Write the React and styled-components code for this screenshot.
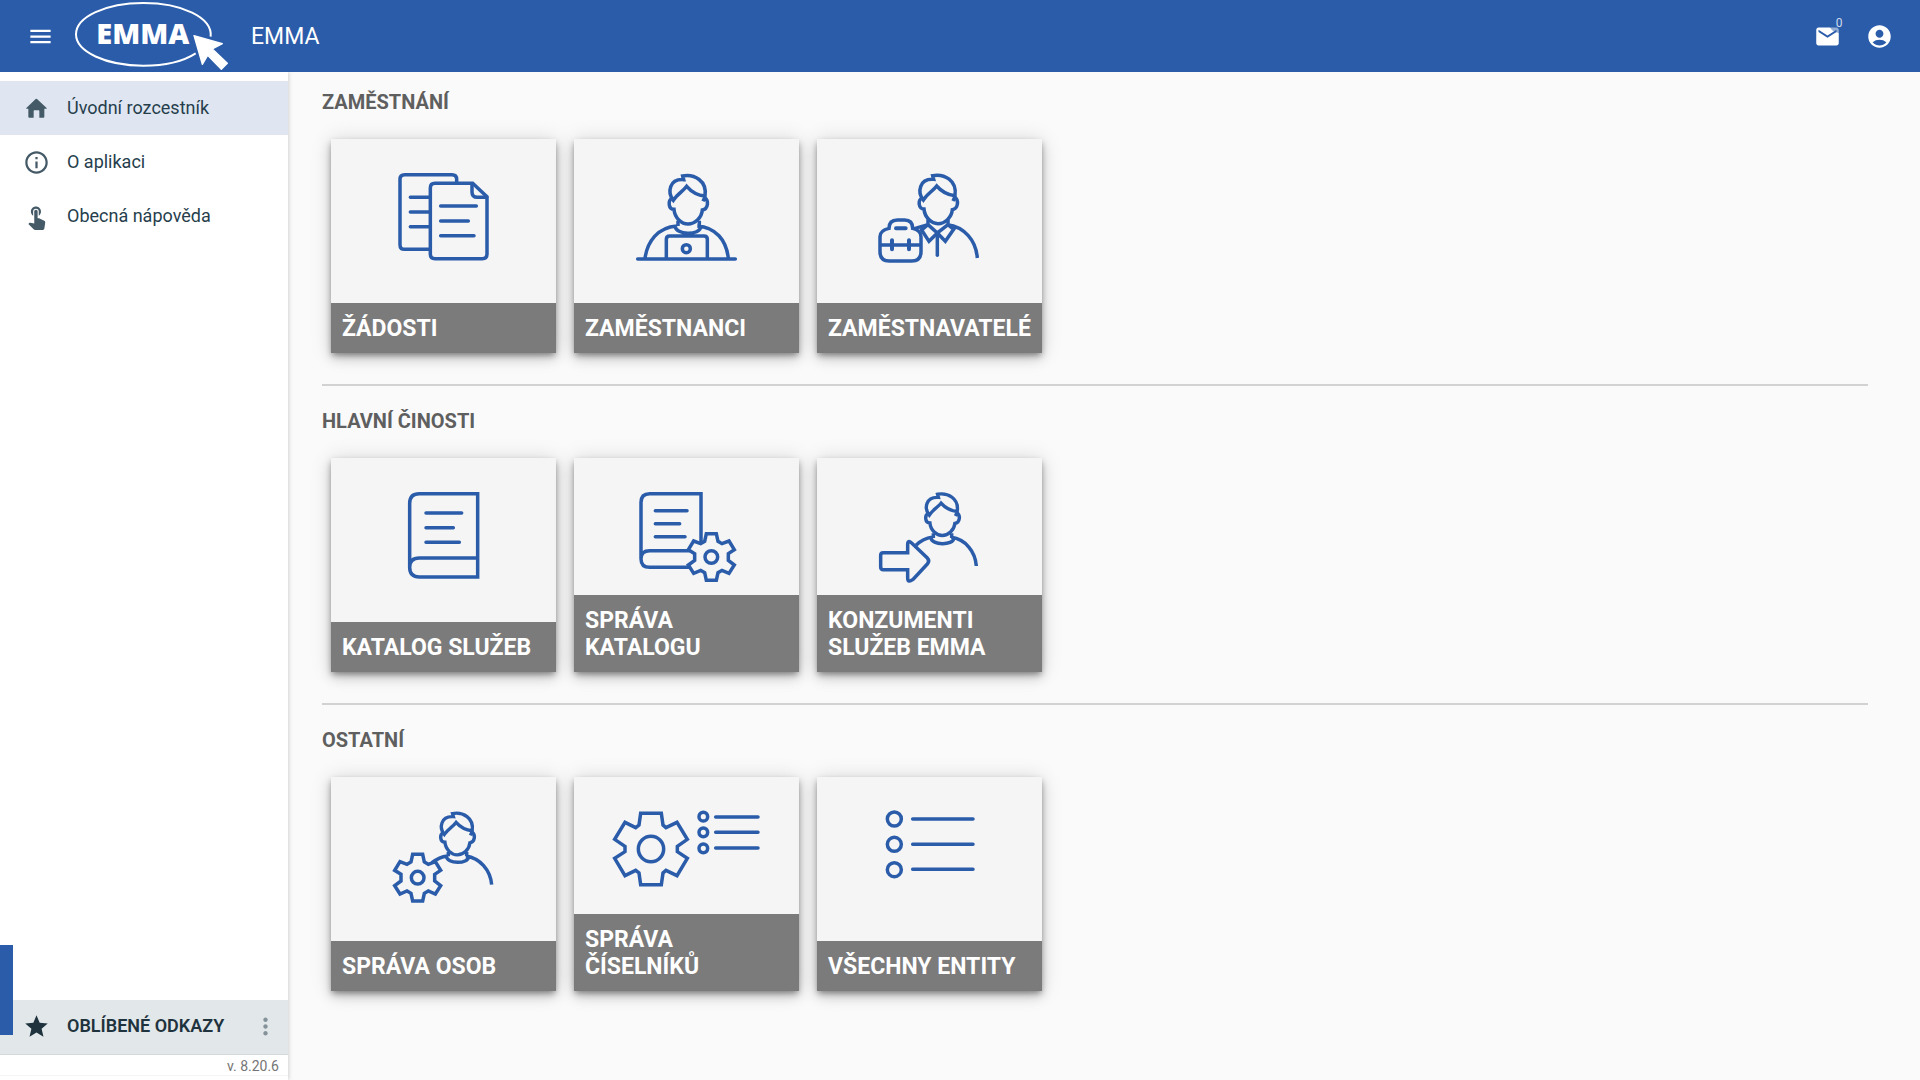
import React from "react";
import styled, { createGlobalStyle } from "styled-components";
import {
  MdMenu,
  MdEmail,
  MdAccountCircle,
  MdInfoOutline,
  MdTouchApp,
  MdStar,
  MdMoreVert,
} from "react-icons/md";

const BLUE = "#2a5caa";

const GlobalStyle = createGlobalStyle`
  *, *::before, *::after { box-sizing: border-box; }
  body {
    margin: 0;
    background: #fafafa;
    font-family: Roboto, "Liberation Sans", sans-serif;
    font-size: 18px;
    line-height: 24px;
  }
  button { font: inherit; border: 0; background: none; padding: 0; cursor: pointer; }
`;

const Page = styled.div`
  display: flex;
  flex-direction: column;
  min-height: 100vh;
`;

const TopBar = styled.header`
  display: flex;
  align-items: center;
  height: 72px;
  padding: 0 27px;
  background: ${BLUE};
  color: #fff;
`;

const IconButton = styled.button`
  display: flex;
  position: relative;
  flex: none;
  color: ${(p) => p.$color || "inherit"};
`;

const LogoLink = styled.a`
  display: flex;
  margin-left: 21px;
`;

const AppTitle = styled.h1`
  margin: 0 auto 0 23px;
  padding-top: 2px;
  font-size: 23px;
  line-height: 32px;
  font-weight: 400;
`;

const Actions = styled.div`
  display: flex;
  gap: 25px;
`;

const Badge = styled.span`
  position: absolute;
  top: -10px;
  right: -8px;
  width: 20px;
  height: 20px;
  border-radius: 50%;
  background: rgba(42, 92, 170, 0.5);
  color: rgba(255, 255, 255, 0.8);
  font-size: 12px;
  line-height: 20px;
  text-align: center;
`;

const Body = styled.div`
  display: flex;
  flex: 1;
`;

const Sidebar = styled.aside`
  position: relative;
  display: flex;
  flex-direction: column;
  flex: none;
  width: 288px;
  padding-top: 9px;
  background: #fff;
  box-shadow: 1px 0 4px rgba(0, 0, 0, 0.16);
  clip-path: inset(0 -8px 0 0);
`;

const MenuLink = styled.a`
  display: flex;
  align-items: center;
  gap: 17px;
  height: 54px;
  padding: 0 23px;
  background: ${(p) => (p.$active ? "#dfe6f1" : "transparent")};
  color: #263e4c;
  text-decoration: none;

  svg { color: #455a67; flex: none; }
`;

const Favourites = styled.div`
  display: flex;
  align-items: center;
  gap: 17px;
  height: 55px;
  margin-top: auto;
  padding: 0 9px 2px 23px;
  border-bottom: 1px solid #d3d9da;
  background: #e2e7e9;
  color: #1e333d;
  font-weight: 600;

  > span { flex: 1; }
`;

const Version = styled.div`
  height: 21px;
  margin-bottom: 4px;
  padding-right: 9px;
  border-bottom: 1px solid #f5f5f5;
  color: #757575;
  font-size: 14px;
  line-height: 22px;
  text-align: right;
`;

const SideHandle = styled.button`
  position: absolute;
  left: 0;
  bottom: 45px;
  width: 13px;
  height: 90px;
  && { background: ${BLUE}; }
`;

const Content = styled.main`
  flex: 1;
  padding: 18px 52px 32px 34px;
`;

const Section = styled.section`
  & + & {
    margin-top: 31px;
    padding-top: 23px;
    border-top: 2px solid #d2d2d2;
  }
`;

const SectionTitle = styled.h2`
  margin: 0 0 25px;
  color: #5f5f5f;
  font-size: 20px;
  line-height: 24px;
  font-weight: 700;
`;

const Tiles = styled.div`
  display: flex;
  flex-wrap: wrap;
  gap: 18px;
  padding: 0 9px;
`;

const Tile = styled.a`
  display: flex;
  flex-direction: column;
  width: 225px;
  min-height: 214px;
  background: #f5f5f5;
  color: #fff;
  text-decoration: none;
  box-shadow: 0 3px 6px -1px rgba(0, 0, 0, 0.4), 0 6px 11px rgba(0, 0, 0, 0.14),
    0 1px 20px rgba(0, 0, 0, 0.14);
`;

const Caption = styled.span`
  margin-top: auto;
  padding: 12px 11px 11px;
  background: #7b7b7b;
  font-size: 23px;
  line-height: 27px;
  font-weight: 700;
`;

const Drawing = styled.svg`
  display: block;
  width: 225px;
  height: 136px;
  fill: none;
  stroke: ${BLUE};
  stroke-width: 10.5;
`;

const Head = ({ transform, strokeWidth }) => (
  <g transform={transform} strokeWidth={strokeWidth}>
    <path d="M325 211C306 187 313 146 356 149L353 138C388 132 427 152 420 198C397 196 378 184 365 169C354 184 337 192 325 211Z" />
    <path d="M321 205C308 212 310 238 327 238C329 264 350 282 369 282C389 282 410 264 412 240C430 237 432 211 419 203L414 214" />
  </g>
);

const SmallGear = ({ transform }) => (
  <g transform={transform}>
    <path d="M-15-70H15L20-47L32-40L53-48L69-22L51-10V10L69 24L53 49L32 40L20 47L15 70H-15L-20 47L-32 40L-53 49L-69 24L-50 10V-10L-69-22L-53-48L-32-40L-20-47Z" />
    <circle r="19" />
  </g>
);

const drawings = {
  requests: (
    <Drawing viewBox="63 177 675 408" strokeLinecap="round">
      <path d="M358 508H284Q270 508 270 494V298Q270 284 284 284H426Q440 284 440 298V306" />
      <path d="M375 310H488L531 350V522Q531 536 517 536H375Q361 536 361 522V324Q361 310 375 310Z" />
      <path d="M486 312V336Q486 352 502 352H530M301 352H358M301 396H358M301 440H358M392 378H499M392 423H475M392 467H492" />
    </Drawing>
  ),
  employees: (
    <Drawing viewBox="27 27 675 408">
      <Head />
      <path d="M339 272V288M403 272V288M330 287C331 317 406 317 407 290M240 385C247 335 278 292 335 288M490 385C484 330 452 292 397 288M304 385V328Q304 318 314 318H417Q427 318 427 328V385" />
      <path d="M218 387H511" strokeLinecap="round" />
      <circle cx="364" cy="356" r="12" />
    </Drawing>
  ),
  employers: (
    <Drawing viewBox="27 27 675 408">
      <Head transform="translate(21 -1)" />
      <path d="M216 320Q216 301 243 295Q243 270 268 270H290Q314 270 314 295Q339 301 339 320V365Q339 393 311 393H244Q216 393 216 365ZM216 345H339" />
      <path d="M252 331V358M303 331V358M264 295H293" strokeWidth="12" strokeLinecap="round" />
      <path d="M360 268V284L388 309L420 284V268M357 286L341 300L363 334L388 309L412 334L437 298L420 284M319 296L360 284M418 284C468 290 504 330 508 384" />
      <path d="M388 310V376" strokeLinecap="round" />
    </Drawing>
  ),
  catalog: (
    <Drawing viewBox="63 204 675 408">
      <path d="M299 533V340Q299 311 328 311H503V561H328Q299 561 299 532Q299 504 328 504H503" />
      <path d="M348 369H455M348 413H430M348 457H448" strokeLinecap="round" />
    </Drawing>
  ),
  catalogAdmin: (
    <Drawing viewBox="27 24 675 408">
      <path d="M408 276V131H254Q228 131 228 157V326Q228 352 254 352H376M228 326Q228 302 254 302H374" />
      <path d="M271 182H366M271 221H344M271 260H360" strokeLinecap="round" />
      <SmallGear transform="translate(439 321)" />
    </Drawing>
  ),
  consumers: (
    <Drawing viewBox="27 24 675 408">
      <Head transform="translate(78 14) scale(.88 .86)" strokeWidth="11.5" />
      <path d="M376 250V264M431 250V264M369 263C370 287 436 287 437 265M324 286Q346 265 372 262M430 262C473 268 502 305 505 348" />
      <path d="M226 308H299V283Q299 269 311 279L358 324Q366 333 358 342L315 388Q299 400 299 384V359H226Q218 359 218 351V316Q218 308 226 308Z" />
    </Drawing>
  ),
  people: (
    <Drawing viewBox="63 264 675 408">
      <Head transform="translate(117 255) scale(.88 .86)" strokeWidth="11.5" />
      <path d="M415 489V502M470 489V502M409 501C410 526 475 526 476 503M366 521Q388 504 412 501M468 501C510 508 541 542 545 587" />
      <SmallGear transform="translate(323 566)" />
    </Drawing>
  ),
  codebooks: (
    <Drawing viewBox="27 24 675 408">
      <path d="M227 133H289L294 168L303 176L336 160L367 211L337 232V248L367 268L336 320L303 304L294 312L289 347H227L222 312L212 304L180 320L149 268L180 248V232L149 211L180 160L212 176L222 168Z" />
      <circle cx="258" cy="240" r="38" />
      <circle cx="415" cy="143" r="13" />
      <circle cx="415" cy="190" r="13" />
      <circle cx="415" cy="238" r="13" />
      <path d="M452 144H579M452 190H579M452 237H579" strokeLinecap="round" />
    </Drawing>
  ),
  entities: (
    <Drawing viewBox="756 24 675 408">
      <circle cx="988" cy="150" r="21" />
      <circle cx="988" cy="226" r="21" />
      <circle cx="988" cy="302" r="21" />
      <path d="M1043 150H1224M1043 226H1224M1043 301H1224" strokeLinecap="round" />
    </Drawing>
  ),
};

const HomeIcon = () => (
  <svg width="27" height="27" viewBox="69 285 81 81" fill="currentColor" aria-hidden="true">
    <path d="M109 296Q110 296 111 297L140 324Q141 326 139 326H133V350Q133 353 130 353H118V333Q118 331 116 331H103Q101 331 101 333V353H88Q85 353 85 350V326H80Q77 326 79 324L107 297Q108 296 109 296Z" />
  </svg>
);

const Logo = () => (
  <svg width="153" height="72" viewBox="225 0 459 216" role="img" aria-label="EMMA">
    <path
      d="M632 110C638 52 545 9 430 9C317 9 228 51 228 103S317 197 430 197C492 197 550 184 587 160"
      fill="none"
      stroke="#fff"
      strokeWidth="6"
    />
    <text x="289" y="131" fill="#fff" fontFamily="'Open Sans', sans-serif" fontWeight="800" fontSize="87">
      EMMA
    </text>
    <path
      d="M582 107L667 131L637 147L682 190L664 208L623 166L607 193Z"
      fill="#fff"
      stroke="#fff"
      strokeWidth="4"
      strokeLinejoin="round"
    />
  </svg>
);

const sections = [
  {
    title: "ZAMĚSTNÁNÍ",
    tiles: [
      ["requests", "ŽÁDOSTI"],
      ["employees", "ZAMĚSTNANCI"],
      ["employers", "ZAMĚSTNAVATELÉ"],
    ],
  },
  {
    title: "HLAVNÍ ČINOSTI",
    tiles: [
      ["catalog", "KATALOG SLUŽEB"],
      ["catalogAdmin", "SPRÁVA KATALOGU"],
      ["consumers", "KONZUMENTI SLUŽEB EMMA"],
    ],
  },
  {
    title: "OSTATNÍ",
    tiles: [
      ["people", "SPRÁVA OSOB"],
      ["codebooks", "SPRÁVA ČÍSELNÍKŮ"],
      ["entities", "VŠECHNY ENTITY"],
    ],
  },
];

export default function App() {
  return (
    <Page>
      <GlobalStyle />
      <TopBar>
        <IconButton aria-label="Menu">
          <MdMenu size={27} />
        </IconButton>
        <LogoLink href="#">
          <Logo />
        </LogoLink>
        <AppTitle>EMMA</AppTitle>
        <Actions>
          <IconButton aria-label="Zprávy">
            <MdEmail size={27} />
            <Badge>0</Badge>
          </IconButton>
          <IconButton aria-label="Uživatel">
            <MdAccountCircle size={27} />
          </IconButton>
        </Actions>
      </TopBar>
      <Body>
        <Sidebar>
          <nav>
            <MenuLink href="#" $active>
              <HomeIcon />
              Úvodní rozcestník
            </MenuLink>
            <MenuLink href="#">
              <MdInfoOutline size={27} />O aplikaci
            </MenuLink>
            <MenuLink href="#">
              <MdTouchApp size={27} />
              Obecná nápověda
            </MenuLink>
          </nav>
          <Favourites>
            <MdStar size={27} />
            <span>OBLÍBENÉ ODKAZY</span>
            <IconButton aria-label="Možnosti" $color="#84929a">
              <MdMoreVert size={27} />
            </IconButton>
          </Favourites>
          <Version>v. 8.20.6</Version>
          <SideHandle aria-label="Panel" />
        </Sidebar>
        <Content>
          {sections.map((section) => (
            <Section key={section.title}>
              <SectionTitle>{section.title}</SectionTitle>
              <Tiles>
                {section.tiles.map(([drawing, label]) => (
                  <Tile href="#" key={label}>
                    {drawings[drawing]}
                    <Caption>{label}</Caption>
                  </Tile>
                ))}
              </Tiles>
            </Section>
          ))}
        </Content>
      </Body>
    </Page>
  );
}
